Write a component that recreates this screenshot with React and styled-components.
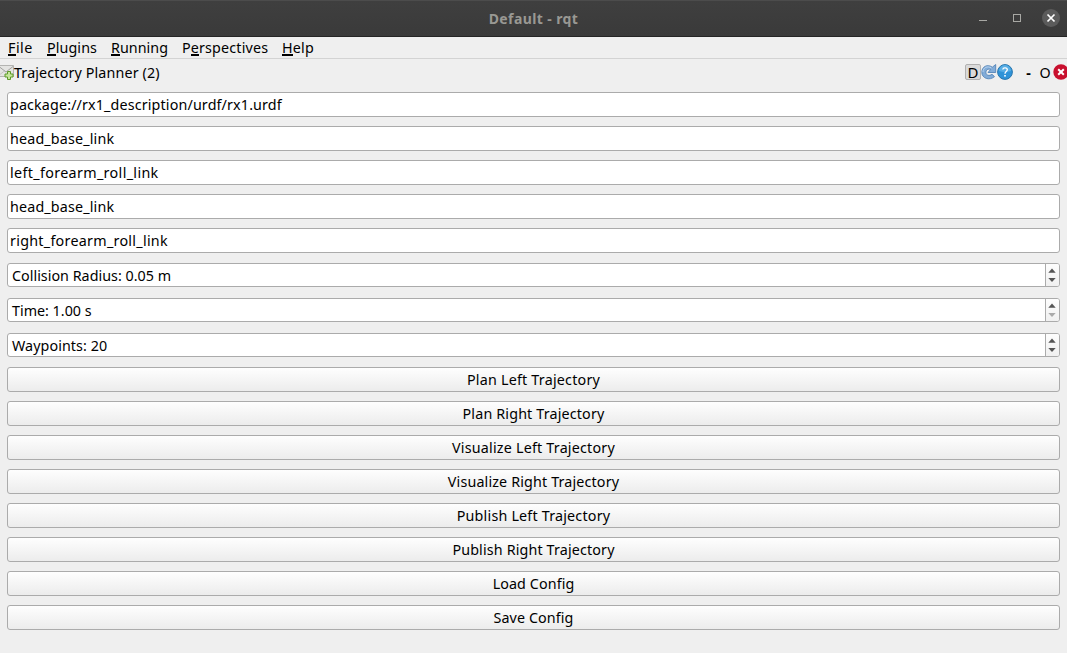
import React from "react";
import styled, { createGlobalStyle } from "styled-components";

const Global = createGlobalStyle`
  * { box-sizing: border-box; }
  html, body { margin: 0; padding: 0; }
  body { background: #efefef; overflow: hidden; }
`;

const Window = styled.div`
  width: 1067px;
  height: 653px;
  display: flex;
  flex-direction: column;
  background: #efefef;
  color: #000;
  font-family: "Noto Sans", "Open Sans", sans-serif;
  font-size: 14.3px;
  line-height: 20px;
  overflow: hidden;
`;

const TitleBar = styled.header`
  height: 37px;
  flex: none;
  display: grid;
  grid-template-columns: 120px 1fr 120px;
  align-items: center;
  background: linear-gradient(#3f3f3f, #3a3a3a);
  border-top: 1px solid #4c4c4c;
  border-bottom: 1px solid #252525;
`;

const WindowTitle = styled.h1`
  grid-column: 2;
  margin: 0;
  text-align: center;
  font-size: 14px;
  font-weight: 700;
  line-height: 20px;
  letter-spacing: 0.4px;
  color: #999893;
`;

const WindowControls = styled.svg`
  display: block;
  width: 120px;
  height: 35px;
`;

const MenuBar = styled.nav`
  height: 22px;
  flex: none;
  display: flex;
  padding-left: 8px;
  border-bottom: 1px solid #d3d3d3;
`;

const MenuItem = styled.span`
  width: ${(p) => p.$width}px;
  white-space: nowrap;
  line-height: 21px;
  letter-spacing: ${(p) => p.$spacing || 0}px;
`;

const Mnemonic = styled.span`
  display: inline-block;
  height: 19px;
  line-height: 21px;
  vertical-align: top;
  border-bottom: 2px solid #000;
`;

const DockBar = styled.div`
  height: 27px;
  flex: none;
  display: flex;
  align-items: flex-start;
  padding-top: 4px;
`;

const DockIcon = styled.svg`
  display: block;
  flex: none;
  width: ${(p) => p.$width || 16}px;
  height: 18px;
`;

const DockTitle = styled.span`
  flex: 1;
  line-height: 19px;
  white-space: nowrap;
  letter-spacing: 0.14px;
`;

const DockLetterButton = styled.span`
  width: 16px;
  height: 16px;
  margin-top: 1px;
  font-size: 15px;
  line-height: 15px;
  text-align: center;
  border: 1px solid #b1b1b1;
  border-radius: 2px;
  background: #dadada;
`;

const DockText = styled.span`
  width: ${(p) => p.$width}px;
  margin-left: ${(p) => p.$gap}px;
  font-weight: ${(p) => p.$weight || 400};
  line-height: 19px;
  text-align: center;
`;

const DockControls = styled.div`
  display: flex;
  flex: none;
  margin-right: -2px;
`;

const Form = styled.main`
  display: flex;
  flex-direction: column;
  padding: 6px 7px 0;
`;

const Group = styled.div`
  display: grid;
  row-gap: ${(p) => p.$gap}px;
  margin-bottom: 10px;
`;

const Field = styled.div`
  height: 25px;
  padding-left: 2px;
  line-height: 23px;
  white-space: nowrap;
  border: 1px solid #ababab;
  border-radius: 3px;
  background: #fff;
  letter-spacing: ${(p) => p.$spacing || 0}px;
`;

const SpinBox = styled.div`
  height: 24px;
  display: flex;
  justify-content: space-between;
  padding-left: 4px;
  line-height: 23px;
  white-space: nowrap;
  border: 1px solid #ababab;
  border-radius: 3px;
  background: #fff;
  overflow: hidden;
  letter-spacing: ${(p) => p.$spacing || 0}px;
`;

const Stepper = styled.svg`
  width: 14px;
  height: 22px;
  border-left: 1px solid #ababab;
  background: linear-gradient(#fdfdfd, #f0f0f0);
`;

const PushButton = styled.button`
  display: block;
  width: 100%;
  height: 25px;
  margin: 0;
  padding: 0;
  font: inherit;
  line-height: 23px;
  color: #000;
  text-align: center;
  border: 1px solid #ababab;
  border-radius: 3px;
  background: linear-gradient(#fefefe, #ececec);
  letter-spacing: ${(p) => p.$spacing || 0}px;
`;

const menus = [
  { before: "", key: "F", after: "ile", width: 39, spacing: 0.45 },
  { before: "", key: "P", after: "lugins", width: 64, spacing: 0.1 },
  { before: "", key: "R", after: "unning", width: 71, spacing: 0.05 },
  { before: "P", key: "e", after: "rspectives", width: 100, spacing: 0.16 },
  { before: "", key: "H", after: "elp", width: 40, spacing: 0.2 },
];

const fields = [
  { text: "package://rx1_description/urdf/rx1.urdf", spacing: 0.14 },
  { text: "head_base_link", spacing: 0.16 },
  { text: "left_forearm_roll_link", spacing: 0.35 },
  { text: "head_base_link", spacing: 0.16 },
  { text: "right_forearm_roll_link", spacing: 0.28 },
];

const spins = [
  { text: "Collision Radius: 0.05 m", spacing: 0.02 },
  { text: "Time: 1.00 s", spacing: 0, atMinimum: true },
  { text: "Waypoints: 20", spacing: 0.08 },
];

const actions = [
  { text: "Plan Left Trajectory", spacing: 0.22 },
  { text: "Plan Right Trajectory", spacing: 0.16 },
  { text: "Visualize Left Trajectory", spacing: 0.21 },
  { text: "Visualize Right Trajectory", spacing: 0.15 },
  { text: "Publish Left Trajectory", spacing: 0.2 },
  { text: "Publish Right Trajectory", spacing: 0.15 },
  { text: "Load Config", spacing: 0.1 },
  { text: "Save Config", spacing: 0.1 },
];

const MailAddIcon = () => (
  <DockIcon $width={14} viewBox="0 0 14 18">
    <path d="M-2 2.5H13.5V13.5H-2Z" fill="#e4e4e2" stroke="#b4b4b2" />
    <path d="M-2 13L5 7.5M13 13L8 8" stroke="#c6c6c4" fill="none" />
    <path d="M-1 3.5L6 9L13 3.5" stroke="#a2a2a0" fill="none" />
    <path d="M7.500 8.500H10.500V11H13V14H10.500V16.500H7.500V14H5V11H7.500Z" fill="#c5e59b" stroke="#5d9a28" />
  </DockIcon>
);

const RefreshIcon = () => (
  <DockIcon viewBox="0 0 16 18">
    <path
      d="M11.300 4.200L14.700 1.500V9.500H7L9.600 6.500C6.800 5.400 4.900 7 4.900 9.500C4.900 12.400 8.500 13.300 11 11.300L13.500 13.600C8.500 18 .8 15.400 .8 9.300C.8 3.300 6.800 .8 11.300 4.200Z"
      fill="#82acd8"
      stroke="#5584b8"
      strokeWidth=".9"
    />
    <path d="M2 9C2 4.500 6.500 2.500 10.500 5" stroke="#b8d3ee" fill="none" />
  </DockIcon>
);

const HelpIcon = () => (
  <DockIcon viewBox="0 0 16 18">
    <circle cx="8" cy="9" r="7.400" fill="#2f93d8" stroke="#2a76ad" />
    <path d="M2 8A6 6 0 0 1 14 8Q8 10 2 8Z" fill="#58aee5" />
    <path
      d="M5.800 6.500C5.900 4.200 10.300 4.200 10.300 6.800C10.300 8.500 8 8.600 8 10.700"
      fill="none"
      stroke="#fff"
      strokeWidth="1.300"
    />
    <rect x="7.200" y="12" width="1.600" height="1.600" fill="#fff" />
  </DockIcon>
);

const CloseIcon = () => (
  <DockIcon viewBox="0 0 16 18">
    <circle cx="8" cy="9" r="7.700" fill="#c8102e" />
    <path d="M5.200 6.200L10.800 11.800M10.800 6.200L5.200 11.800" stroke="#fff" strokeWidth="2" />
  </DockIcon>
);

const StepArrows = ({ atMinimum }) => (
  <Stepper viewBox="0 0 13 22">
    <path d="M2.300 8.700L6 4.600L9.700 8.700Z" fill="#555" />
    <path d="M2.300 14L6 18L9.700 14Z" fill={atMinimum ? "#aaa" : "#555"} />
  </Stepper>
);

export default function App() {
  return (
    <Window>
      <Global />
      <TitleBar>
        <WindowTitle>Default - rqt</WindowTitle>
        <WindowControls viewBox="0 0 120 35">
          <path d="M32 19.500H40" stroke="#a8a8a4" />
          <rect x="66.500" y="13.500" width="7" height="7" fill="none" stroke="#a8a8a4" />
          <circle cx="104" cy="17" r="9" fill="#5b5b5b" />
          <path d="M100.500 13.500L107.500 20.500M107.500 13.500L100.500 20.500" stroke="#fff" strokeWidth="1.700" />
        </WindowControls>
      </TitleBar>
      <MenuBar>
        {menus.map((m) => (
          <MenuItem key={m.after} $width={m.width} $spacing={m.spacing}>
            {m.before}
            <Mnemonic>{m.key}</Mnemonic>
            {m.after}
          </MenuItem>
        ))}
      </MenuBar>
      <DockBar>
        <MailAddIcon />
        <DockTitle>Trajectory Planner (2)</DockTitle>
        <DockControls>
          <DockLetterButton>D</DockLetterButton>
          <RefreshIcon />
          <HelpIcon />
          <DockText $width={9} $gap={11} $weight={700}>-</DockText>
          <DockText $width={16} $gap={4}>O</DockText>
          <CloseIcon />
        </DockControls>
      </DockBar>
      <Form>
        <Group $gap={9}>
          {fields.map((f, i) => (
            <Field key={i} $spacing={f.spacing}>{f.text}</Field>
          ))}
        </Group>
        <Group $gap={11}>
          {spins.map((s) => (
            <SpinBox key={s.text} $spacing={s.spacing}>
              {s.text}
              <StepArrows atMinimum={s.atMinimum} />
            </SpinBox>
          ))}
        </Group>
        <Group $gap={9}>
          {actions.map((a) => (
            <PushButton key={a.text} $spacing={a.spacing}>{a.text}</PushButton>
          ))}
        </Group>
      </Form>
    </Window>
  );
}
